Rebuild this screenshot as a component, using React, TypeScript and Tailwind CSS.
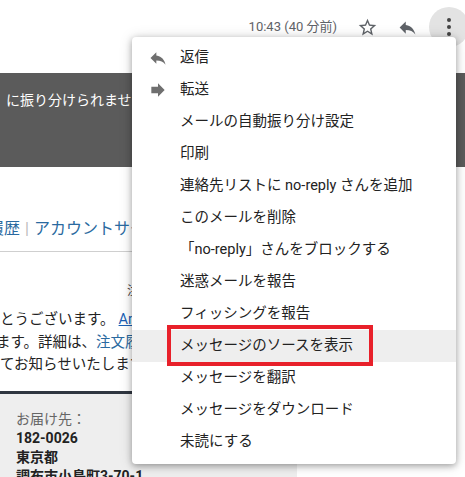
const font = { fontFamily: '"Roboto", "Noto Sans CJK JP", sans-serif' };

function ReplyIcon({ className }: { className?: string }) {
  return (
    <svg viewBox="0 0 24 24" className={className} fill="currentColor">
      <path d="M10 9V5l-7 7 7 7v-4.1c5 0 8.5 1.6 11 5.1-1-5-4-10-11-11z" />
    </svg>
  );
}

function ForwardIcon({ className }: { className?: string }) {
  return (
    <svg viewBox="0 0 24 24" className={className} fill="currentColor">
      <path d="M12 8V4l8 8-8 8v-4H4V8z" />
    </svg>
  );
}

function StarIcon({ className }: { className?: string }) {
  return (
    <svg viewBox="0 0 24 24" className={className} fill="currentColor">
      <path d="M22 9.24l-7.19-.62L12 2 9.19 8.63 2 9.24l5.46 4.73L5.82 21 12 17.27 18.18 21l-1.63-7.03L22 9.24zM12 15.4l-3.76 2.27 1-4.28-3.32-2.88 4.38-.38L12 6.1l1.71 4.04 4.38.38-3.32 2.88 1 4.28L12 15.4z" />
    </svg>
  );
}

const items: { label: string; icon?: 'reply' | 'forward'; active?: boolean }[] = [
  { label: '返信', icon: 'reply' },
  { label: '転送', icon: 'forward' },
  { label: 'メールの自動振り分け設定' },
  { label: '印刷' },
  { label: '連絡先リストに no-reply さんを追加' },
  { label: 'このメールを削除' },
  { label: '「no-reply」さんをブロックする' },
  { label: '迷惑メールを報告' },
  { label: 'フィッシングを報告' },
  { label: 'メッセージのソースを表示', active: true },
  { label: 'メッセージを翻訳' },
  { label: 'メッセージをダウンロード' },
  { label: '未読にする' },
];

export default function App() {
  return (
    <div className="relative w-[465px] h-[477px] overflow-hidden bg-white" style={font}>
      {/* header row */}
      <div className="h-[54px] flex items-center justify-end">
        <span className="text-[13px] text-[#5f6368] mr-[20px]">10:43 (40 分前)</span>
        <StarIcon className="w-[21px] h-[21px] text-[#5f6368] mr-[19px]" />
        <ReplyIcon className="w-[21px] h-[21px] text-[#5f6368] mr-[11px]" />
        <div className="w-[40px] h-[40px] rounded-full bg-[#e3e3e3] flex flex-col items-center justify-center gap-[3px] mr-[-4px] shrink-0">
          <span className="w-[4px] h-[4px] rounded-full bg-[#444]" />
          <span className="w-[4px] h-[4px] rounded-full bg-[#444]" />
          <span className="w-[4px] h-[4px] rounded-full bg-[#444]" />
        </div>
      </div>

      {/* email body, clipped on the left */}
      <div className="mt-[19px] h-[94px] bg-[#5b5b5b] pt-[17px]">
        <div className="ml-[-8px] text-[14px] text-white whitespace-nowrap">】に振り分けられませんでした</div>
      </div>

      <div className="mt-[51px] ml-[-12px] text-[16px] text-[#2a6aa0] whitespace-nowrap leading-[22px]">
        履歴<span className="text-[#bbb] mx-[5px]">|</span>アカウントサービス
      </div>
      <div className="mt-[11px] h-px w-[140px] bg-[#cfcfcf]" />

      <div className="mt-[31px] ml-[127px] text-[12px] text-[#444] whitespace-nowrap leading-[16px]">注文番号</div>

      <div className="mt-[10px] text-[14.5px] text-[#222] leading-[22.5px] whitespace-nowrap">
        <div>
          とうございます。<span className="text-[#1a5fb4] underline ml-[4px]">Amazon</span>
        </div>
        <div className="ml-[-4px]">
          ます。詳細は、<span className="text-[#2a6aa0]">注文履歴</span>
        </div>
        <div>てお知らせいたします。</div>
      </div>

      <div className="mt-[14px] w-[297px] h-[120px] bg-[#eeeeee] border-t-[3px] border-[#2f3640] pl-[16px] pt-[16px] leading-[19px] text-[14px]">
        <div className="text-[#666]">お届け先：</div>
        <div className="font-bold text-[#222]">182-0026</div>
        <div className="font-bold text-[#222]">東京都</div>
        <div className="font-bold text-[#222] whitespace-nowrap">調布市小島町3-70-1</div>
      </div>

      {/* dropdown menu */}
      <div className="absolute left-[132px] top-[37px] w-[324px] bg-white rounded-[4px] shadow-[0_2px_6px_rgba(0,0,0,0.3),0_1px_14px_rgba(0,0,0,0.15)] pt-[5px] pb-[6px]">
        {items.map((it) => (
          <div
            key={it.label}
            className={`h-[32px] flex items-center text-[14.5px] text-[#222] whitespace-nowrap ${it.active ? 'bg-[#eeeeee]' : ''}`}
          >
            <div className="w-[48px] flex items-center justify-center pl-[4px]">
              {it.icon === 'reply' && <ReplyIcon className="w-[20px] h-[20px] text-[#6f6f6f]" />}
              {it.icon === 'forward' && <ForwardIcon className="w-[20px] h-[20px] text-[#6f6f6f]" />}
            </div>
            <span>{it.label}</span>
          </div>
        ))}
      </div>

      {/* red highlight box */}
      <div className="absolute left-[167px] top-[325px] w-[206px] h-[41px] border-[4px] border-[#e8202a]" />
    </div>
  );
}
